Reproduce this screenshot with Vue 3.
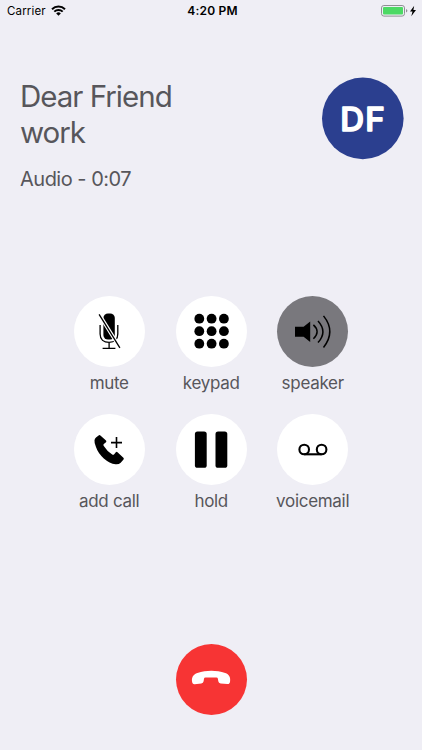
<template>
  <main class="call-screen">
    <header class="status-bar">
      <div class="status-side">
        <span>Carrier</span>
        <svg class="wifi" viewBox="0 0 15 11" aria-hidden="true">
          <path d="M1 4.2a9.3 9.3 0 0 1 13 0M3.3 6.6a6 6 0 0 1 8.4 0" fill="none" stroke="#000" stroke-width="2" />
          <path d="M5.2 8.4a3.3 3.3 0 0 1 4.6 0L7.5 10.8z" />
        </svg>
      </div>
      <strong class="clock">4:20 PM</strong>
      <div class="status-side end">
        <svg class="battery" viewBox="0 0 36 12" aria-hidden="true">
          <rect x=".5" y=".5" width="23" height="10.6" rx="2.4" fill="none" stroke="#8f8f93" />
          <rect x="2" y="2" width="20" height="7.6" rx="1" fill="#4cd964" />
          <path d="M25 4v3.6q1.4-.5 1.4-1.8T25 4" fill="#8f8f93" />
          <path d="M33.2.7 29 6.6h2.5l-1.2 4.7 4.7-6.4h-2.6z" />
        </svg>
      </div>
    </header>

    <section class="caller">
      <div>
        <h1>Dear Friend<br />work</h1>
        <p>Audio - 0:07</p>
      </div>
      <svg class="avatar" viewBox="0 0 82 82">
        <circle cx="40.8" cy="41.4" r="40.8" />
        <text x="41.2" y="53.8" text-anchor="middle">DF</text>
      </svg>
    </section>

    <section class="actions">
      <div v-for="action in actions" :key="action.id" class="action">
        <button
          type="button"
          class="round-button"
          :class="{ active: action.active }"
          :aria-label="action.label"
          @click="action.active = !action.active"
        >
          <svg v-if="action.id === 'mute'" viewBox="0 0 71 71">
            <rect x="29.4" y="17.4" width="11.4" height="26.2" rx="4.6" />
            <path class="line" d="M26.1 29v9c0 5.2 3.6 8.4 9 8.4s8.7-3.2 8.7-8.4v-9M35.1 46.4v6M28.6 52.4h12.8" />
            <path class="slash-gap" d="M25.1 18.3 45.9 51.8" />
            <path class="line" d="M25.1 18.3 45.9 51.8" />
          </svg>
          <svg v-else-if="action.id === 'keypad'" viewBox="0 0 71 71">
            <circle
              v-for="n in 9"
              :key="n"
              :cx="23.3 + ((n - 1) % 3) * 12.3"
              :cy="22.7 + Math.floor((n - 1) / 3) * 12.5"
              r="4.9"
            />
          </svg>
          <svg v-else-if="action.id === 'speaker'" viewBox="0 0 71 71">
            <path d="M18 30.8h8.6l6.6-5.3v20.6l-6.6-5.3H18z" />
            <path class="line wave" d="M36.4 28.9q7.4 6.7 0 13.8M41 24.9q9.8 10.7 0 21.7M46.5 19.9q12.6 15.6 0 31.6" />
          </svg>
          <svg v-else-if="action.id === 'add'" viewBox="0 0 71 71">
            <path d="M24.6 21.4q.9-.8 1.8.1l5.6 5.1q.8.8 0 1.6l-2.2 1.9q-.7.7-.2 1.6 3.5 5.6 8.6 8.8 1 .6 1.8-.1l1.8-2.1q.8-.9 1.7 0l5.9 5.5q.9.9.1 1.8l-2.8 3.1q-2 2-5.2 1.6Q35.6 49.4 29.8 44.4t-8-11.8q-1.6-4-1.3-6.4.2-1.8 1.5-2.8z" />
            <path class="line plus" d="M42.5 23.1v11M37 28.6h11" />
          </svg>
          <svg v-else-if="action.id === 'hold'" viewBox="0 0 71 71">
            <rect x="18.9" y="17.4" width="11.8" height="36.4" rx="2.6" />
            <rect x="39.5" y="17.4" width="11.8" height="36.4" rx="2.6" />
          </svg>
          <svg v-else viewBox="0 0 71 71">
            <g class="tape">
              <circle cx="27.2" cy="35.5" r="4.8" />
              <circle cx="44.6" cy="35.5" r="4.8" />
              <path d="M27.2 40.3h17.4" />
            </g>
          </svg>
        </button>
        <span class="action-label">{{ action.label }}</span>
      </div>
    </section>

    <footer class="hangup">
      <button type="button" class="round-button danger" aria-label="end call">
        <svg viewBox="0 0 71 71">
          <path d="M16 37.2c-.5-4 1.4-6.8 5.4-8.2 9-3.1 19-3.1 27.8 0 4 1.4 5.4 4.3 4.9 8.3q-.2 3-2.7 2.8l-6.8-.7q-2-.3-2.3-2.1l-.4-2.5q-.2-1.2-1.5-1.3H29.5q-1.4.1-1.5 1.3l-.4 2.5q-.3 1.8-2.3 2.1l-6.6.8q-2.4.2-2.7-3z" />
        </svg>
      </button>
    </footer>
  </main>
</template>

<script setup>
import { ref } from 'vue'

const actions = ref([
  { id: 'mute', label: 'mute', active: false },
  { id: 'keypad', label: 'keypad', active: false },
  { id: 'speaker', label: 'speaker', active: true },
  { id: 'add', label: 'add call', active: false },
  { id: 'hold', label: 'hold', active: false },
  { id: 'voicemail', label: 'voicemail', active: false },
])
</script>

<style>
body {
  margin: 0;
  background: #efeef5;
}
</style>

<style scoped>
.call-screen {
  box-sizing: border-box;
  height: 750px;
  display: flex;
  flex-direction: column;
  overflow: hidden;
  background: #efeef5;
  color: #57565b;
  font-family: Inter, "Liberation Sans", sans-serif;
}

.status-bar {
  height: 21px;
  flex: none;
  padding: 0 5px 0 7px;
  display: grid;
  grid-template-columns: 1fr auto 1fr;
  align-items: center;
  color: #000;
  font-size: 11.5px;
}

.status-side {
  display: flex;
  align-items: center;
  gap: 5px;
  letter-spacing: 0.15px;
}

.status-side.end {
  justify-content: flex-end;
}

.wifi {
  width: 15px;
  height: 11px;
}

.clock {
  padding-left: 1px;
  font-weight: 600;
  font-size: 12px;
  letter-spacing: 0.2px;
}

.battery {
  width: 36px;
  height: 12px;
}

.caller {
  height: 274.5px;
  flex: none;
  box-sizing: border-box;
  padding: 56.4px 18px 0 20px;
  display: flex;
  justify-content: space-between;
  align-items: flex-start;
}

.caller h1 {
  margin: 0.6px 0 0;
  font-size: 29.5px;
  font-weight: 400;
  line-height: 36px;
  letter-spacing: -1px;
}

.caller p {
  margin: 17.4px 0 0;
  font-size: 20px;
  line-height: 24px;
  letter-spacing: -0.5px;
}

.avatar {
  width: 82px;
  height: 82px;
  overflow: visible;
  fill: #2b3f8f;
}

.avatar text {
  fill: #fff;
  stroke: #fff;
  stroke-width: 1.6;
  stroke-linejoin: round;
  font-size: 33px;
  font-weight: 500;
  letter-spacing: 1.2px;
}

.actions {
  padding: 0 58.2px;
  display: grid;
  grid-template-columns: 102px 102px 101px;
  grid-auto-rows: 118px;
}

.action {
  display: flex;
  flex-direction: column;
  align-items: center;
}

.round-button {
  width: 71px;
  height: 71px;
  flex: none;
  padding: 0;
  border: 0;
  border-radius: 50%;
  background: #fff;
  cursor: pointer;
}

.round-button.active {
  background: #79787d;
}

.round-button.danger {
  background: #f73434;
}

.round-button svg {
  width: 71px;
  height: 71px;
  display: block;
}

.danger svg {
  fill: #fff;
}

.line {
  fill: none;
  stroke: #000;
  stroke-width: 1.3;
}

.wave {
  stroke-width: 1.5;
}

.plus {
  stroke-width: 1.6;
}

.slash-gap {
  stroke: #fff;
  stroke-width: 3.6;
}

.tape {
  fill: none;
  stroke: #000;
  stroke-width: 2.1;
}

.action-label {
  margin-top: 5.5px;
  font-size: 17px;
  line-height: 22px;
  letter-spacing: -0.3px;
  white-space: nowrap;
}

.hangup {
  margin-top: auto;
  padding-bottom: 35px;
  display: flex;
  justify-content: center;
}
</style>
